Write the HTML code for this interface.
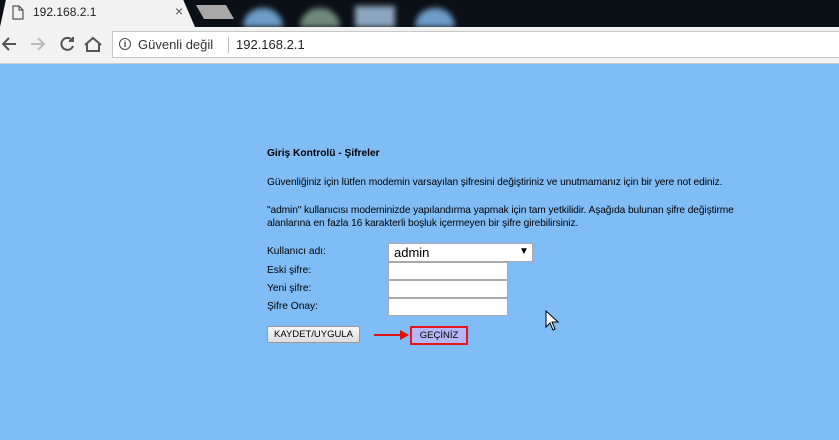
<!DOCTYPE html>
<html><head><meta charset="utf-8"><style>
body{margin:0;width:839px;height:440px;overflow:hidden;background:#80bcf6;font-family:"Liberation Sans",sans-serif;position:relative}
.a{position:absolute}
.t{font-size:10.2px;color:#000;white-space:nowrap}
.inp{position:absolute;background:#fff;border:1px solid #a9a9a9;box-sizing:border-box}
</style></head><body>
<div class="a" style="left:0;top:0;width:839px;height:27px;background:#0b1016"></div>
<div class="a" style="left:200px;top:5px;width:30px;height:14px;background:#a8a8a8;transform:skewX(30deg)"></div>
<div class="a" style="left:243px;top:8px;width:40px;height:19px;border-radius:20px 20px 0 0;background:#6d9cc8;filter:blur(3px)"></div>
<div class="a" style="left:300px;top:8px;width:40px;height:19px;border-radius:20px 20px 0 0;background:#6f8a7c;filter:blur(3px)"></div>
<div class="a" style="left:355px;top:6px;width:40px;height:21px;background:#8ca6bf;filter:blur(3px)"></div>
<div class="a" style="left:415px;top:8px;width:40px;height:19px;border-radius:20px 20px 0 0;background:#6d9cc8;filter:blur(3px)"></div>
<div class="a" style="left:0;top:0;width:195px;height:27px;background:#f2f2f2;clip-path:polygon(3% 0,94% 0,100% 100%,0 100%)"></div>
<svg class="a" style="left:12px;top:5px" width="12" height="15"><path d="M1 1h6l4 4v9H1z M7 1v4h4" fill="none" stroke="#555" stroke-width="1.2"/></svg>
<div class="a" style="left:33px;top:5px;font-size:12px;color:#222">192.168.2.1</div>
<div class="a" style="left:175px;top:3px;font-size:14px;color:#555">×</div>
<div class="a" style="left:0;top:27px;width:839px;height:36px;background:#f2f2f2"></div>
<svg class="a" style="left:0;top:35px" width="110" height="20"><g fill="none" stroke-width="2"><path d="M16 9H3M9 3L3 9l6 6" stroke="#555"/><path d="M31 9h13M38 3l6 6-6 6" stroke="#bbb"/><path d="M72 5a6 6 0 1 0 1 6M73 2v4h-4" stroke="#555"/><path d="M85 10l8-7 8 7M87 9v7h12V9" stroke="#555"/></g></svg>
<div class="a" style="left:112px;top:31px;width:730px;height:27px;background:#fff;border:1px solid #c8c8c8;box-sizing:border-box"></div>
<div class="a" style="left:119px;top:38px;width:10px;height:10px;border:1.3px solid #444;border-radius:50%;font-size:9px;line-height:10px;text-align:center;color:#444;font-weight:bold">i</div>
<div class="a" style="left:138px;top:37px;font-size:13px;color:#333">Güvenli değil</div>
<div class="a" style="left:228px;top:37px;width:1px;height:16px;background:#bbb"></div>
<div class="a" style="left:236px;top:37px;font-size:13px;color:#222">192.168.2.1</div>
<div class="a" style="left:0;top:63px;width:839px;height:1px;background:#ccc"></div>

<div class="a t" style="left:267px;top:148px;font-weight:bold">Giriş Kontrolü - Şifreler</div>
<div class="a t" style="left:267px;top:177px;letter-spacing:-0.1px">Güvenliğiniz için lütfen modemin varsayılan şifresini değiştiriniz ve unutmamanız için bir yere not ediniz.</div>
<div class="a t" style="left:267px;top:204px;line-height:13px;letter-spacing:-0.1px">"admin" kullanıcısı modeminizde yapılandırma yapmak için tam yetkilidir. Aşağıda bulunan şifre değiştirme<br>alanlarına en fazla 16 karakterli boşluk içermeyen bir şifre girebilirsiniz.</div>
<div class="a t" style="left:267px;top:246px">Kullanıcı adı:</div>
<div class="a t" style="left:267px;top:265px">Eski şifre:</div>
<div class="a t" style="left:267px;top:283px">Yeni şifre:</div>
<div class="a t" style="left:267px;top:301px">Şifre Onay:</div>
<div class="inp" style="left:388px;top:243px;width:145px;height:19px"><span class="a" style="left:5px;top:1px;font-size:13px">admin</span><span class="a" style="left:130px;top:2px;font-size:10px">▼</span></div>
<div class="inp" style="left:388px;top:262px;width:120px;height:18px"></div>
<div class="inp" style="left:388px;top:280px;width:120px;height:18px"></div>
<div class="inp" style="left:388px;top:298px;width:120px;height:18px"></div>
<div class="a" style="left:267px;top:326px;width:93px;height:17px;background:linear-gradient(#f8f8f8,#ddd);border:1px solid #999;box-sizing:border-box;border-radius:2px;font-size:9.5px;text-align:center;line-height:15px">KAYDET/UYGULA</div>
<svg class="a" style="left:372px;top:329px" width="40" height="12"><path d="M2 6h28" stroke="#e01010" stroke-width="2"/><path d="M28 1l9 5-9 5z" fill="#e01010"/></svg>
<div class="a" style="left:410px;top:326px;width:58px;height:19px;border:2px solid #e8141c;box-sizing:border-box;background:#b4b8f6;font-size:9.5px;text-align:center;line-height:15px">GEÇİNİZ</div>
<svg class="a" style="left:545px;top:310px" width="14" height="22"><path d="M1 1v16l4-4 3 7 2-1-3-7h6z" fill="#fff" stroke="#000"/></svg>
</body></html>
